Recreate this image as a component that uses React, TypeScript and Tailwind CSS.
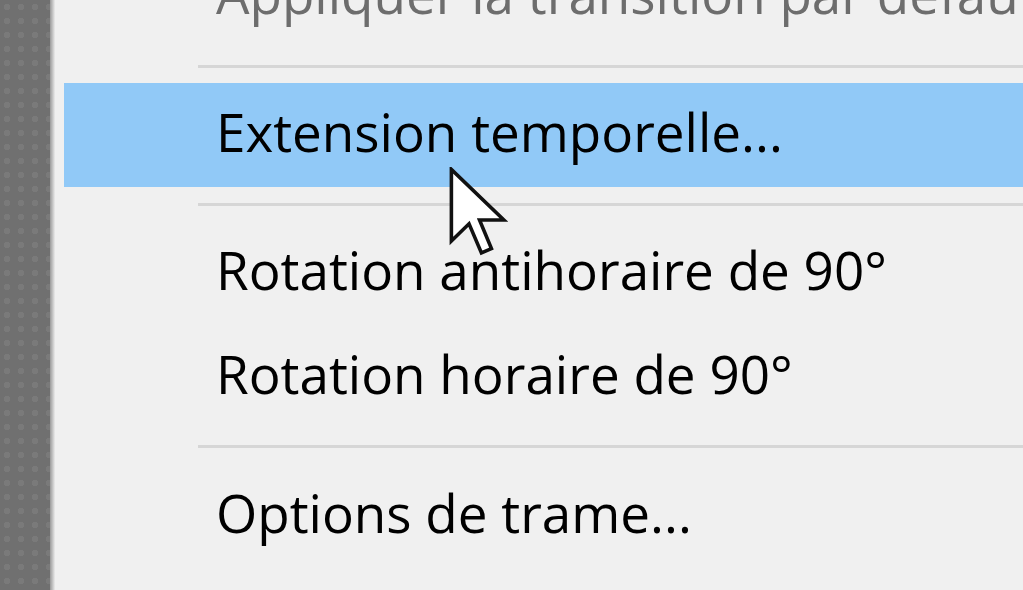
import React from "react";

type Entry =
  | { kind: "item"; label: string; disabled?: boolean; active?: boolean }
  | { kind: "sep"; h: number };

const entries: Entry[] = [
  { kind: "item", label: "Appliquer la transition par défaut", disabled: true },
  { kind: "sep", h: 34 },
  { kind: "item", label: "Extension temporelle...", active: true },
  { kind: "sep", h: 34 },
  { kind: "item", label: "Rotation antihoraire de 90°" },
  { kind: "item", label: "Rotation horaire de 90°" },
  { kind: "sep", h: 35 },
  { kind: "item", label: "Options de trame..." },
];

const Cursor = () => (
  <svg
    className="absolute left-[449px] top-[167px]"
    width="62"
    height="94"
    viewBox="0 0 13 19.7"
  >
    <path
      d="M0.5 0.5 L0.5 15.5 L4.2 11.9 L6.8 18 L8.9 17.1 L6.4 11.1 L11.5 11.1 Z"
      fill="#fff"
      stroke="#111"
      strokeWidth="0.75"
      strokeLinejoin="miter"
    />
  </svg>
);

export default function App() {
  return (
    <div
      className="relative flex h-[590px] w-[1023px] overflow-hidden bg-[#f0f0f0]"
      style={{ fontFamily: '"Open Sans", "Noto Sans", sans-serif' }}
    >
      {/* canvas behind the menu */}
      <div className="w-[50px] shrink-0 bg-[#707070] bg-[radial-gradient(#7a7a7a_30%,transparent_32%)] bg-[length:14px_14px]" />
      <div className="w-[5px] shrink-0 bg-gradient-to-r from-[#9a9a9a] to-[#ececec]" />

      <div className="flex flex-1 flex-col -mt-[55px]">
        {entries.map((e, i) =>
          e.kind === "sep" ? (
            <div key={i} className="flex items-center" style={{ height: e.h }}>
              <div className="ml-[143px] h-[3px] flex-1 bg-[#d6d6d6]" />
            </div>
          ) : (
            <div
              key={i}
              className={
                "ml-[9px] flex h-[104px] shrink-0 items-center pb-[7px] pl-[152px] text-[53px] whitespace-nowrap " +
                (e.active ? "bg-[#91c9f7]" : "") +
                (e.disabled ? " text-[#6d6d6d]" : " text-[#000]")
              }
            >
              <span className="leading-none">{e.label}</span>
            </div>
          )
        )}
      </div>

      <Cursor />
    </div>
  );
}
